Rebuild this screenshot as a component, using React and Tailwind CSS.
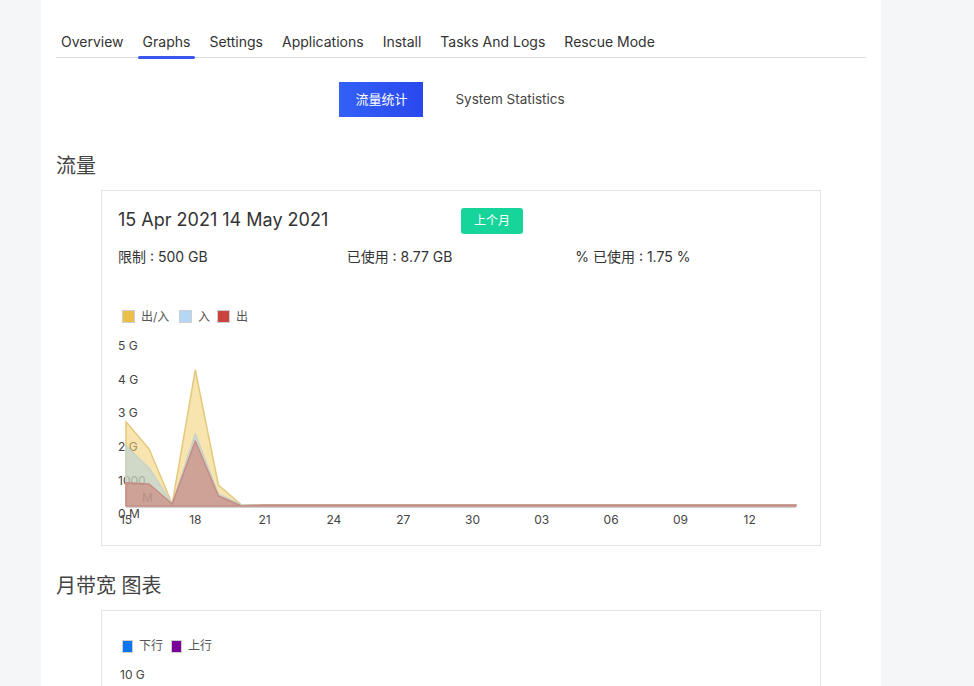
const tabs = ['Overview', 'Graphs', 'Settings', 'Applications', 'Install', 'Tasks And Logs', 'Rescue Mode'];

const days = ['15', '18', '21', '24', '27', '30', '03', '06', '09', '12'];

// y positions (chart-local) for the first six days, the rest stay flat
const total = [120.7, 148, 203, 69, 184, 204];
const incoming = [145, 167, 203, 132.7, 193, 204];
const outgoing = [181.7, 183, 203, 140, 195, 205];

const STEP = 23.1;
const X0 = 8;
const BASE = 205;

const buildPoints = (vals) => {
    const pts = [];
    for (let i = 0; i < 30; i++) {
        const y = i < vals.length ? vals[i] : 204;
        pts.push(`${(X0 + i * STEP).toFixed(1)},${y}`);
    }
    return pts;
};

const areaPath = (vals) => {
    const pts = buildPoints(vals);
    const last = (X0 + 29 * STEP).toFixed(1);
    return `M${X0},${BASE} L${pts.join(' L')} L${last},${BASE} Z`;
};

const TrafficChart = () => (
    <svg width="686" height="236" className="block" style={{ fontFamily: 'Inter, "Noto Sans CJK SC", sans-serif' }}>
        {/* legend */}
        <rect x="4.5" y="9.5" width="12" height="12" fill="#ebc04a" stroke="#cfcfcf" />
        <text x="23" y="19.5" fontSize="12" fill="#555">出/入</text>
        <rect x="61.5" y="9.5" width="12" height="12" fill="#b3d7f5" stroke="#cfcfcf" />
        <text x="80" y="19.5" fontSize="12" fill="#555">入</text>
        <rect x="99.5" y="9.5" width="12" height="12" fill="#c9443f" stroke="#cfcfcf" />
        <text x="118" y="19.5" fontSize="12" fill="#555">出</text>

        {/* y labels */}
        <g fontSize="12" fill="#444">
            <text x="0" y="49">5 G</text>
            <text x="0" y="83">4 G</text>
            <text x="0" y="116">3 G</text>
            <text x="0" y="150">2 G</text>
            <text x="0" y="184">1000</text>
            <text x="24" y="201">M</text>
            <text x="0" y="217">0 M</text>
        </g>

        {/* areas */}
        <path d={areaPath(total)} fill="rgba(240,205,110,0.55)" stroke="#e3c97e" strokeWidth="1.5" strokeLinejoin="round" />
        <path d={areaPath(incoming)} fill="rgba(170,205,225,0.5)" stroke="#c9d3c8" strokeWidth="1.5" strokeLinejoin="round" />
        <path d={areaPath(outgoing)} fill="rgba(200,110,100,0.5)" stroke="#c68c86" strokeWidth="1.5" strokeLinejoin="round" />
        <line x1={X0} y1="206.5" x2={X0 + 29 * STEP} y2="206.5" stroke="#d0d0d0" strokeWidth="1" />

        {/* x labels */}
        <g fontSize="12" fill="#444" textAnchor="middle">
            {days.map((d, i) => (
                <text key={d} x={X0 + i * 3 * STEP} y="223">{d}</text>
            ))}
        </g>
    </svg>
);

const App = () => {
    return (
        <div className="min-h-screen bg-[#f5f6f8]" style={{ fontFamily: 'Inter, "Noto Sans CJK SC", sans-serif' }}>
            <div className="ml-[41px] w-[840px] min-h-screen bg-white px-[15px] pt-[32px]">
                {/* tabs */}
                <div className="flex border-b border-[#dcdcdc]">
                    {tabs.map((t) => (
                        <div key={t} className="relative mr-[9px] px-[5px] pb-[5px] text-[14px] leading-[20px] text-[#333]">
                            {t}
                            {t === 'Graphs' && (
                                <span className="absolute left-0 right-0 bottom-[-2px] h-[3px] rounded-full bg-[#3a57f0]"></span>
                            )}
                        </div>
                    ))}
                </div>

                {/* sub tabs */}
                <div className="mt-[24px] flex justify-center gap-4 pr-[2px]">
                    <button className="h-[35px] px-4 text-[13px] text-white bg-gradient-to-r from-[#3360f7] to-[#2a48ee]">
                        流量统计
                    </button>
                    <button className="h-[35px] px-4 text-[13.5px] text-[#444]">
                        System Statistics
                    </button>
                </div>

                {/* traffic */}
                <h2 className="mt-[35px] text-[20px] leading-[28px] text-[#444]">流量</h2>
                <div className="mt-[10px] ml-[45px] w-[720px] border border-[#e3e3e3] px-4 pt-4 pb-[8px]">
                    <div className="grid grid-cols-2">
                        <div className="text-[18px] leading-[26px] text-[#333]">15 Apr 2021 14 May 2021</div>
                        <div>
                            <span className="inline-flex h-[26px] w-[62px] items-center justify-center rounded-[3px] bg-[#17d49b] text-[12px] text-white">
                                上个月
                            </span>
                        </div>
                    </div>
                    <div className="mt-[13px] grid grid-cols-3 text-[14px] leading-[20px] text-[#333]">
                        <div>限制 : 500 GB</div>
                        <div>已使用 : 8.77 GB</div>
                        <div>% 已使用 : 1.75 %</div>
                    </div>
                    <div className="mt-[34px]">
                        <TrafficChart />
                    </div>
                </div>

                {/* monthly bandwidth */}
                <h2 className="mt-[26px] text-[20px] leading-[28px] text-[#444]">月带宽 图表</h2>
                <div className="mt-[10px] ml-[45px] w-[720px] h-[110px] border border-[#e3e3e3] pl-[20px] pr-4 pt-[27px]">
                    <div className="flex items-center gap-[6px] text-[12px] leading-[16px] text-[#555]">
                        <span className="h-[13px] w-[11px] border border-[#cfcfcf] bg-[#0b74f1]"></span>
                        <span>下行</span>
                        <span className="ml-[2px] h-[13px] w-[11px] border border-[#cfcfcf] bg-[#7a0399]"></span>
                        <span>上行</span>
                    </div>
                    <div className="mt-[13px] ml-[-2px] text-[12px] leading-[16px] text-[#444]">10 G</div>
                </div>
            </div>
        </div>
    );
};

export default App;
